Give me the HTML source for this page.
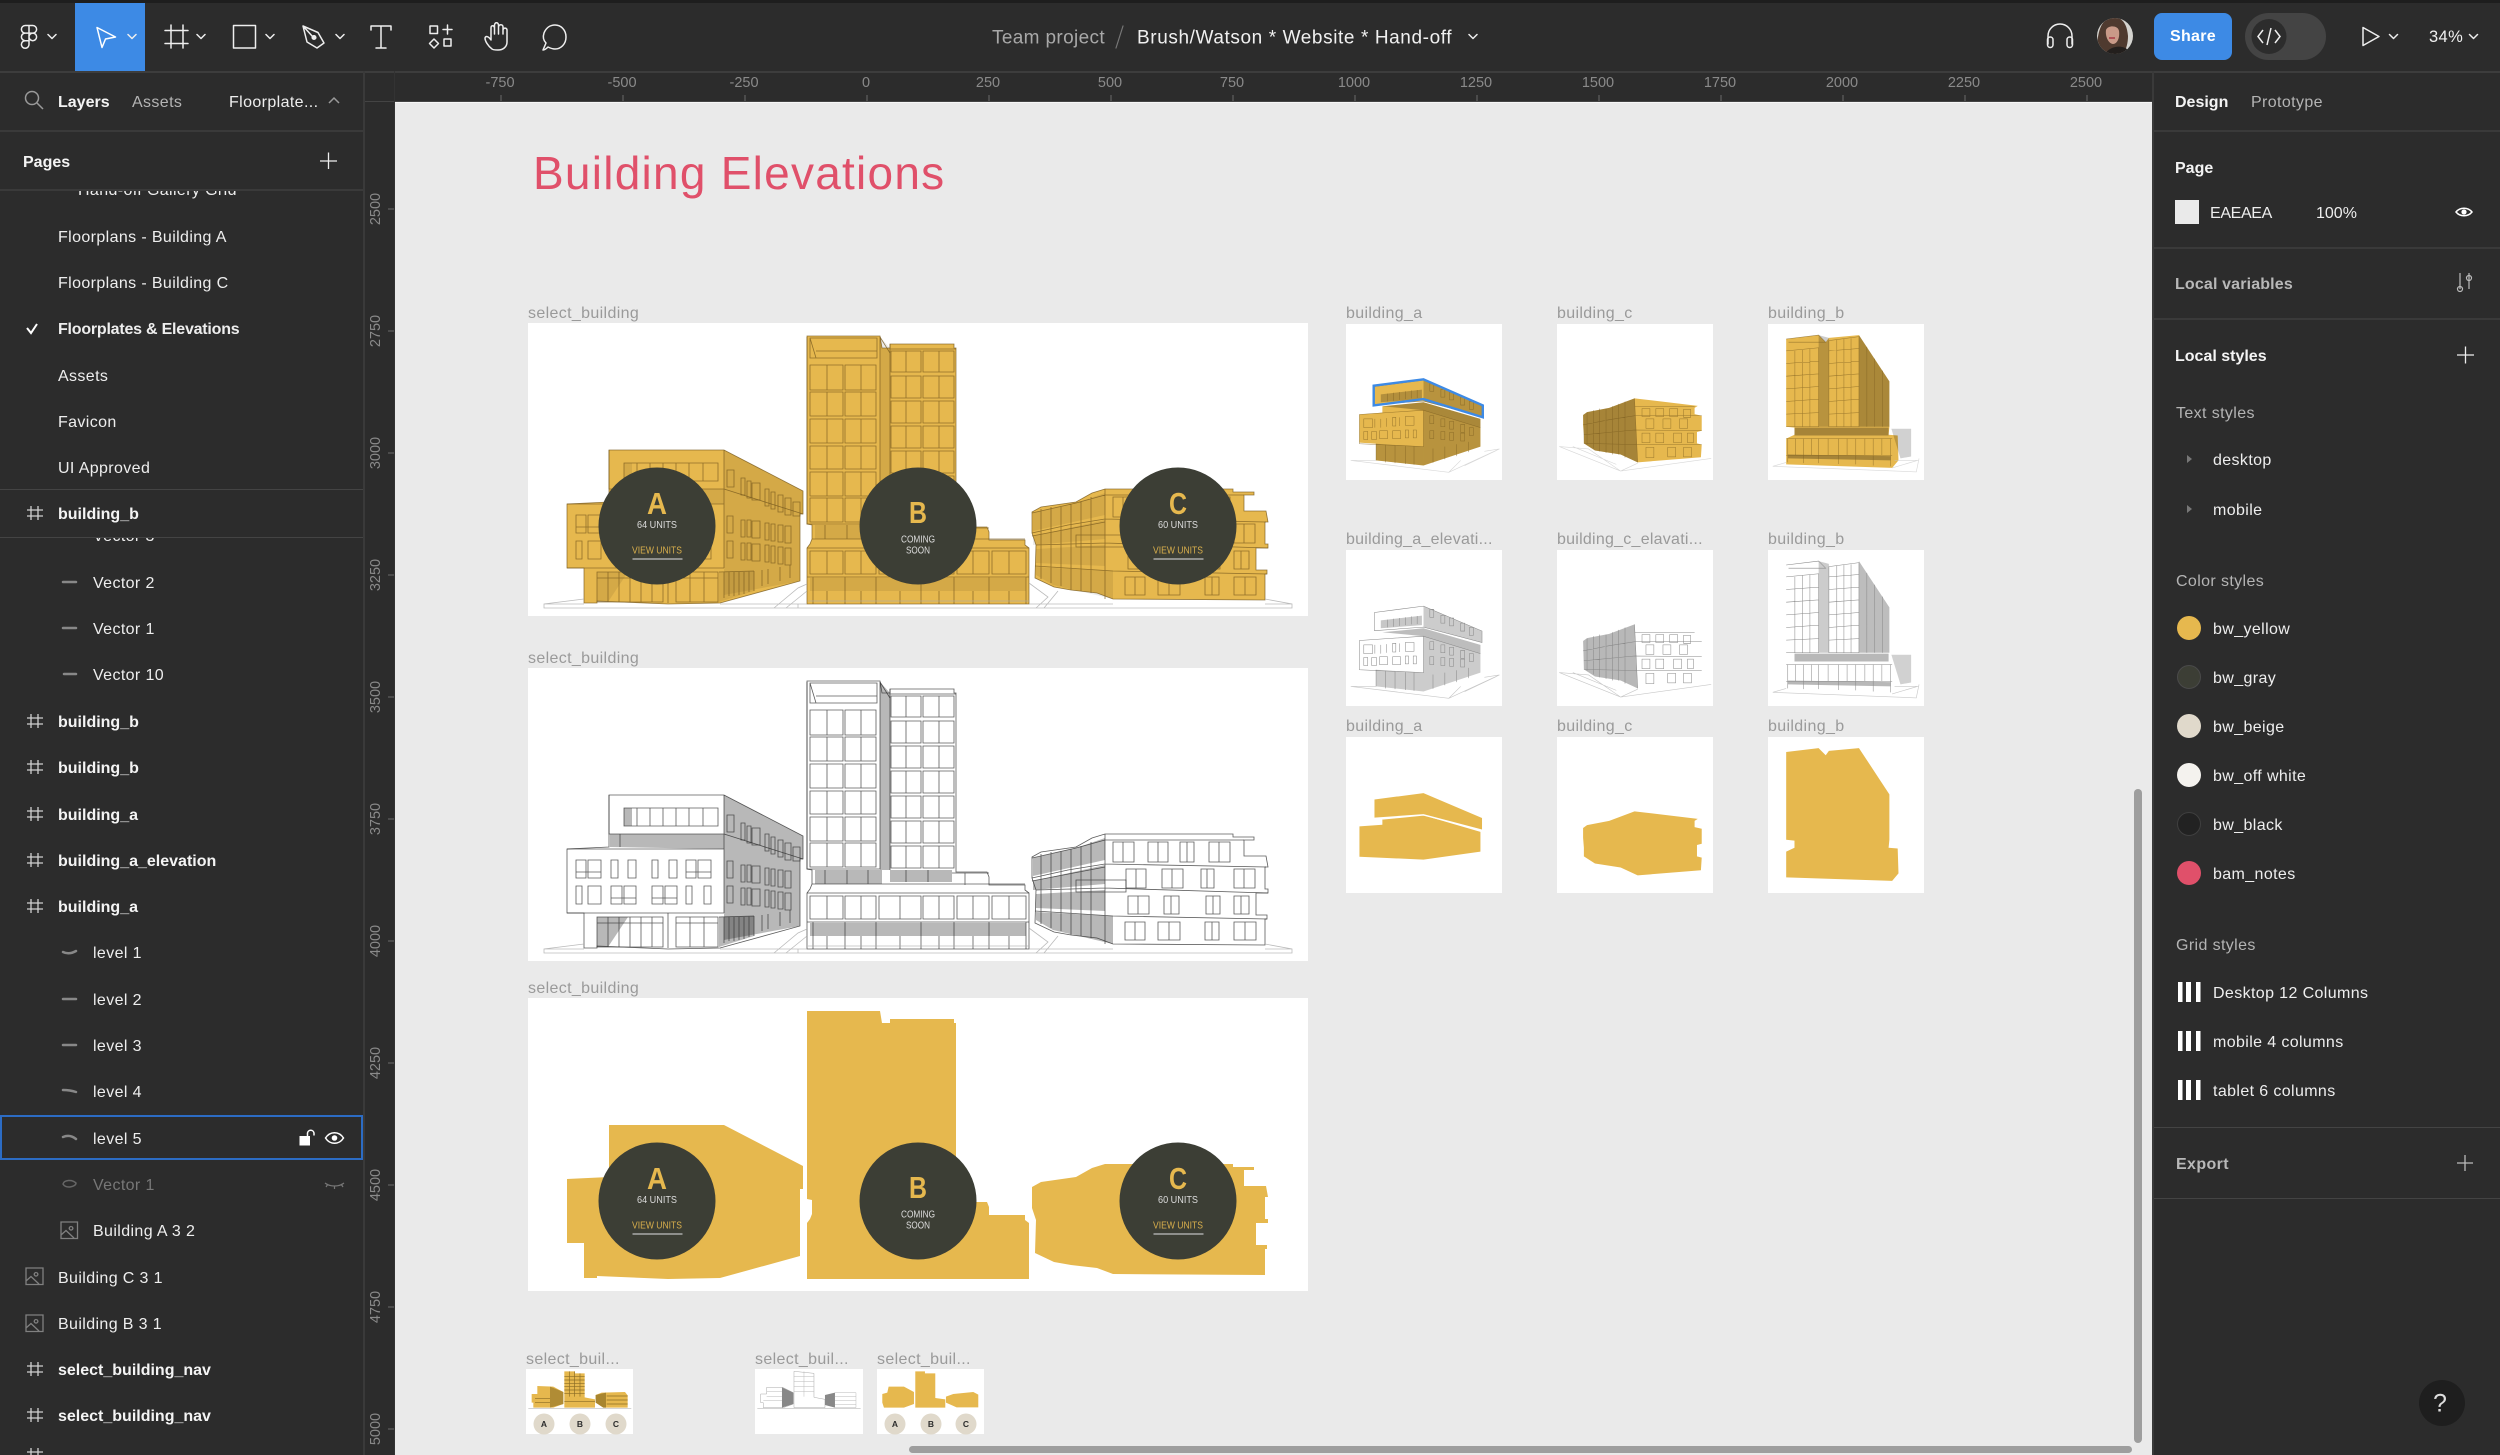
<!DOCTYPE html>
<html><head><meta charset="utf-8"><title>Figma</title>
<style>
html,body{margin:0;padding:0;width:2500px;height:1455px;overflow:hidden;background:#2c2c2c}
body{position:relative;font-family:"Liberation Sans",sans-serif;color:#eee}
.t{position:absolute;z-index:2;white-space:nowrap;line-height:1;transform:translateY(-50%);margin-top:1.5px;font-size:16px;letter-spacing:.38px;color:#eee}
.b{font-weight:700;color:#f4f4f4;letter-spacing:0}
.g{color:#b4b4b4}
.l{color:#9a9a9a;font-size:16px;letter-spacing:.35px}
.r{color:#8a8a8a;font-size:14.5px;letter-spacing:0;text-align:center;width:80px;margin:0 0 0 -1px}
.rv{position:absolute;z-index:2;color:#8a8a8a;font-size:14.5px;line-height:1;width:60px;text-align:center;transform:translate(-50%,-50%) rotate(-90deg);left:376px}
.box{position:absolute}
svg{position:absolute;left:0;top:0;z-index:1}
</style></head><body>
<div class="box" style="left:0;top:0;width:2500px;height:3px;background:#1e1e1e"></div>
<div class="box" style="left:395px;top:102px;width:1757px;height:1353px;background:#eaeaea;border-top:1px solid #f7f7f7;box-sizing:border-box"></div>
<div class="box" style="left:75px;top:3px;width:70px;height:68px;background:#3d8ae5"></div>
<div class="box" style="left:0;top:71px;width:2500px;height:2px;background:#3d3d3d"></div>
<div class="box" style="left:363px;top:71px;width:2px;height:1384px;background:#3a3a3a"></div>
<div class="box" style="left:365px;top:101px;width:1787px;height:1px;background:#444"></div>
<div class="box" style="left:394px;top:71px;width:1px;height:1384px;background:#333"></div>
<div class="box" style="left:2152px;top:71px;width:2px;height:1384px;background:#3a3a3a"></div>
<div class="box" style="left:0;top:130px;width:363px;height:2px;background:#3a3a3a"></div>
<div class="box" style="left:2154px;top:130px;width:346px;height:2px;background:#3a3a3a"></div>
<div class="box" style="left:2154px;top:247px;width:346px;height:2px;background:#3a3a3a"></div>
<div class="box" style="left:2154px;top:318px;width:346px;height:2px;background:#3a3a3a"></div>
<div class="box" style="left:2154px;top:1127px;width:346px;height:1px;background:#444"></div>
<div class="box" style="left:2154px;top:1198px;width:346px;height:1px;background:#444"></div>

<!-- Page list (clipped first row) -->
<div class="box" style="left:0;top:189px;width:363px;height:2px;background:#3a3a3a"></div>
<div class="box" style="left:0;top:191px;width:363px;height:12px;overflow:hidden"><div class="t" style="left:78px;top:-2px">Hand-off Gallery Grid</div></div>
<div class="box" style="left:0;top:489px;width:363px;height:1px;background:#444"></div>
<div class="box" style="left:0;top:537px;width:363px;height:1px;background:#444"></div>
<div class="box" style="left:0;top:538px;width:363px;height:12px;overflow:hidden"><div class="t" style="left:93px;top:-3px">Vector 3</div></div>
<div class="box" style="left:0;top:1115px;width:363px;height:45px;border:2px solid #2c6cc4;box-sizing:border-box"></div>

<!-- top bar text -->
<div class="t" style="left:992px;top:36px;font-size:19px;color:#a8a8a8;letter-spacing:.35px">Team project</div>
<div class="t" style="left:1137px;top:36px;font-size:19px;letter-spacing:.6px;color:#f0f0f0">Brush/Watson * Website * Hand-off</div>
<div class="t" style="left:2170px;top:35.5px;font-size:16px;font-weight:700;color:#fff;letter-spacing:.3px">Share</div>
<div class="t" style="left:2429px;top:35.5px;font-size:16.5px;color:#f0f0f0">34%</div>

<!-- left panel text -->
<div class="t b" style="left:58px;top:101px">Layers</div>
<div class="t g" style="left:132px;top:101px">Assets</div>
<div class="t" style="left:229px;top:101px">Floorplate...</div>
<div class="t b" style="left:23px;top:161px">Pages</div>
<div class="t" style="left:58px;top:236px">Floorplans - Building A</div>
<div class="t" style="left:58px;top:282px">Floorplans - Building C</div>
<div class="t" style="left:58px;top:328px;font-weight:700;letter-spacing:-.22px">Floorplates &amp; Elevations</div>
<div class="t" style="left:58px;top:375px">Assets</div>
<div class="t" style="left:58px;top:421px">Favicon</div>
<div class="t" style="left:58px;top:467px">UI Approved</div>
<div class="t b" style="left:58px;top:513px">building_b</div>
<div class="t" style="left:93px;top:582px">Vector 2</div>
<div class="t" style="left:93px;top:628px">Vector 1</div>
<div class="t" style="left:93px;top:674px">Vector 10</div>
<div class="t b" style="left:58px;top:721px">building_b</div>
<div class="t b" style="left:58px;top:767px">building_b</div>
<div class="t b" style="left:58px;top:814px">building_a</div>
<div class="t b" style="left:58px;top:860px">building_a_elevation</div>
<div class="t b" style="left:58px;top:906px">building_a</div>
<div class="t" style="left:93px;top:952px">level 1</div>
<div class="t" style="left:93px;top:999px">level 2</div>
<div class="t" style="left:93px;top:1045px">level 3</div>
<div class="t" style="left:93px;top:1091px">level 4</div>
<div class="t" style="left:93px;top:1138px">level 5</div>
<div class="t" style="left:93px;top:1184px;color:#777">Vector 1</div>
<div class="t" style="left:93px;top:1230px">Building A 3 2</div>
<div class="t" style="left:58px;top:1277px">Building C 3 1</div>
<div class="t" style="left:58px;top:1323px">Building B 3 1</div>
<div class="t b" style="left:58px;top:1369px">select_building_nav</div>
<div class="t b" style="left:58px;top:1415px">select_building_nav</div>

<!-- right panel text -->
<div class="t b" style="left:2175px;top:101px">Design</div>
<div class="t g" style="left:2251px;top:101px">Prototype</div>
<div class="t b" style="left:2175px;top:167px">Page</div>
<div class="t" style="left:2210px;top:212px;letter-spacing:-.35px">EAEAEA</div>
<div class="t" style="left:2316px;top:212px;letter-spacing:0">100%</div>
<div class="t" style="left:2175px;top:283px;font-weight:700;color:#b8b8b8;letter-spacing:.15px">Local variables</div>
<div class="t b" style="left:2175px;top:355px">Local styles</div>
<div class="t g" style="left:2176px;top:412px">Text styles</div>
<div class="t" style="left:2213px;top:459px">desktop</div>
<div class="t" style="left:2213px;top:509px">mobile</div>
<div class="t g" style="left:2176px;top:580px">Color styles</div>
<div class="t" style="left:2213px;top:628px">bw_yellow</div>
<div class="t" style="left:2213px;top:677px">bw_gray</div>
<div class="t" style="left:2213px;top:726px">bw_beige</div>
<div class="t" style="left:2213px;top:775px">bw_off white</div>
<div class="t" style="left:2213px;top:824px">bw_black</div>
<div class="t" style="left:2213px;top:873px">bam_notes</div>
<div class="t g" style="left:2176px;top:944px">Grid styles</div>
<div class="t" style="left:2213px;top:992px">Desktop 12 Columns</div>
<div class="t" style="left:2213px;top:1041px">mobile 4 columns</div>
<div class="t" style="left:2213px;top:1090px">tablet 6 columns</div>
<div class="t" style="left:2176px;top:1163px;font-weight:700;color:#b8b8b8">Export</div>
<div class="t" style="left:2433px;top:1402px;font-size:25px;color:#ddd;letter-spacing:0">?</div>

<!-- rulers -->
<div class="t r" style="left:461px;top:83px">-750</div><div class="t r" style="left:583px;top:83px">-500</div><div class="t r" style="left:705px;top:83px">-250</div><div class="t r" style="left:827px;top:83px">0</div><div class="t r" style="left:949px;top:83px">250</div><div class="t r" style="left:1071px;top:83px">500</div><div class="t r" style="left:1193px;top:83px">750</div><div class="t r" style="left:1315px;top:83px">1000</div><div class="t r" style="left:1437px;top:83px">1250</div><div class="t r" style="left:1559px;top:83px">1500</div><div class="t r" style="left:1681px;top:83px">1750</div><div class="t r" style="left:1803px;top:83px">2000</div><div class="t r" style="left:1925px;top:83px">2250</div><div class="t r" style="left:2047px;top:83px">2500</div>
<div class="rv" style="top:209px">2500</div><div class="rv" style="top:331px">2750</div><div class="rv" style="top:453px">3000</div><div class="rv" style="top:575px">3250</div><div class="rv" style="top:697px">3500</div><div class="rv" style="top:819px">3750</div><div class="rv" style="top:941px">4000</div><div class="rv" style="top:1063px">4250</div><div class="rv" style="top:1185px">4500</div><div class="rv" style="top:1307px">4750</div><div class="rv" style="top:1429px">5000</div>

<!-- canvas labels -->
<div class="t" style="left:533px;top:171px;font-size:46px;color:#e0506a;letter-spacing:1.25px">Building Elevations</div>
<div class="t l" style="left:528px;top:312px">select_building</div>
<div class="t l" style="left:528px;top:657px">select_building</div>
<div class="t l" style="left:528px;top:987px">select_building</div>
<div class="t l" style="left:1346px;top:312px">building_a</div>
<div class="t l" style="left:1557px;top:312px">building_c</div>
<div class="t l" style="left:1768px;top:312px">building_b</div>
<div class="t l" style="left:1346px;top:538px;letter-spacing:.25px">building_a_elevati...</div>
<div class="t l" style="left:1557px;top:538px;letter-spacing:.25px">building_c_elavati...</div>
<div class="t l" style="left:1768px;top:538px">building_b</div>
<div class="t l" style="left:1346px;top:725px">building_a</div>
<div class="t l" style="left:1557px;top:725px">building_c</div>
<div class="t l" style="left:1768px;top:725px">building_b</div>
<div class="t l" style="left:526px;top:1358px">select_buil...</div>
<div class="t l" style="left:755px;top:1358px">select_buil...</div>
<div class="t l" style="left:877px;top:1358px">select_buil...</div>

<svg width="2500" height="1455" viewBox="0 0 2500 1455">
<defs>
<polygon id="sa" points="81,127 196,127 275,168 275,191 272,191 272,258 192,280 140,281 69,278 69,280 56,280 56,245 39,245 39,181 81,179"/>
<polygon id="sb" points="279,13 352,13 354,25 362,25 362,21 426,21 426,25 428,25 428,204 459,204 461,209 461,217 497,217 497,222 501,225 501,281 279,281 279,225 282,221 284,216 284,202 279,201"/>
<polygon id="sc" points="504,189 513,184 548,179 564,170 577,166 705,166 705,169 726,169 726,172 716,172 716,188 738,188 740,199 737,199 737,221 740,221 740,225 728,225 728,247 739,247 739,251 737,251 737,277 585,276 569,270 543,267 526,264 507,255 508,222 504,210 504,190"/>
<g id="shade" stroke="none" fill="#000">
 <polygon points="196,127 275,168 275,191 272,191 272,258 196,272 196,245 196,166"/>
 <polygon points="96,140 104,140 104,158 96,158"/>
 <polygon points="82,166 196,166 196,181 82,179"/>
 <polygon points="69,249 100,249 80,279 69,279"/>
 <polygon points="191,249 226,248 226,268 191,279"/>
 <polygon points="287,202 354,202 354,216 287,216"/>
 <polygon points="362,202 424,202 424,214 362,214"/>
 <polygon points="352,14 362,25 362,202 352,202"/>
 <rect x="282" y="255" width="216" height="13"/>
 <polygon points="505,190 548,180 577,170 577,192 505,208"/>
 <polygon points="505,213 577,197 577,216 505,222"/>
 <polygon points="508,226 577,222 577,243 508,240"/>
 <polygon points="508,244 585,248 585,276 525,262 508,252"/>
</g>
<g id="lines" fill="none" stroke-width=".8">
 <use href="#sa"/><use href="#sb"/><use href="#sc"/>
 <path d="M279 14V201H352V14M282 15H349V35H282ZM282 15L288 35M288 28H349M352 14L362 30"/>
 <path d="M282 42h33v25h-33zM317 42h31v25h-31zM299 42v25M333 42v25M282 69h33v24h-33zM317 69h31v24h-31zM299 69v24M333 69v24M282 96h33v24h-33zM317 96h31v24h-31zM299 96v24M333 96v24M282 123h33v23h-33zM317 123h31v23h-31zM299 123v23M333 123v23M282 149h33v24h-33zM317 149h31v24h-31zM299 149v24M333 149v24M282 175h33v24h-33zM317 175h31v24h-31zM299 175v24M333 175v24"/>
 <path d="M362 21V202M362 26H428M363 28h30v21h-30zM395 28h31v21h-31zM378 28v21M411 28v21M363 53h30v22h-30zM395 53h31v22h-31zM378 53v22M411 53v22M363 78h30v22h-30zM395 78h31v22h-31zM378 78v22M411 78v22M363 103h30v22h-30zM395 103h31v22h-31zM378 103v22M411 103v22M363 128h30v22h-30zM395 128h31v22h-31zM378 128v22M411 128v22M363 153h30v22h-30zM395 153h31v22h-31zM378 153v22M411 153v22M363 178h30v22h-30zM395 178h31v22h-31zM378 178v22M411 178v22"/>
 <path d="M297 202v14M319 202v14M340 202v14M378 202v12M400 202v12M424 205H461M437 205v12M284 216H497M279 225H501M282 228h33v23h-33zM317 228h31v23h-31zM351 228h42v23h-42zM395 228h31v23h-31zM429 228h32v23h-32zM464 228h34v23h-34zM299 228v23M333 228v23M372 228v23M411 228v23M445 228v23M481 228v23M279 254H501M285 254v27M317 254v27M348 254v27M393 254v27M426 254v27M461 254v27M498 254v27M299 268v13M333 268v13M372 268v13M411 268v13M445 268v13M481 268v13"/>
 <path d="M81 127V166H196V127M96 140h94v18h-94zM109 140v18M122 140v18M135 140v18M148 140v18M161 140v18M175 140v18M92 166v13M196 166V245M39 181H196M39 245H196M196 166L275 191"/>
 <path d="M48 192h10v18h-10zM60 192h13v18h-13zM48 204h25M83 192h7v18h-7zM100 192h8v18h-8zM124 192h6v18h-6zM141 192h8v18h-8zM158 192h10v18h-10zM170 192h13v18h-13zM158 204h25"/>
 <path d="M48 218h6v18h-6zM60 218h13v18h-13zM83 218h11v18h-11zM96 218h12v18h-12zM83 230h25M124 218h11v18h-11zM137 218h12v18h-12zM124 230h25M158 218h6v18h-6zM176 218h7v18h-7z"/>
 <path d="M69 249h66v30H69zM69 255h66M80 249v30M91 249v30M102 249v30M113 249v30M124 249v30M140 245v35M148 249h42v30h-42zM148 255h42M162 249v30M176 249v30M196 249v26M201 249v24M206 249v24M211 249v23M216 249v22M221 248v21M226 248v20M191 249l35-1"/>
 <path d="M199 147h7v17h-7zM213 155h4v17h-4zM219 158h4v17h-4zM224 160h8v17h-8zM237 166h4v17h-4zM243 169h4v17h-4zM250 172h5v17h-5zM257 175h6v17h-6zM265 179h7v14h-7zM199 193h6v17h-6zM213 197h4v17h-4zM219 197h4v17h-4zM224 198h8v17h-8zM237 200h4v17h-4zM243 201h4v17h-4zM250 202h5v17h-5zM257 203h6v17h-6zM199 218h6v17h-6zM213 220h4v17h-4zM219 220h4v17h-4zM224 221h8v17h-8zM237 222h4v17h-4zM243 223h4v17h-4zM250 224h5v17h-5zM257 225h6v17h-6zM234 247v16M240 246v15M252 244v14M262 242v13"/>
 <path d="M577 166V276M504 210L540 202L577 196L738 199M504 213L577 199M508 222L577 220L740 225M507 243L585 248L739 251M577 172H716M504 190L548 180L577 172M513 186v70M523 184v76M533 183v80M543 181v86M553 178v90M563 174v96M548 212h50v12h-50z"/>
 <path d="M585 174h21v20h-21zM620 174h20v20h-20zM652 174h14v20h-14zM681 174h21v20h-21zM595 174v20M630 174v20M659 174v20M691 174v20M598 201h20v19h-20zM634 201h21v19h-21zM673 201h13v19h-13zM706 201h21v19h-21zM608 201v19M644 201v19M679 201v19M716 201v19M600 228h21v18h-21zM636 228h15v18h-15zM678 228h14v18h-14zM706 228h15v18h-15zM610 228v18M643 228v18M685 228v18M713 228v18M597 254h20v18h-20zM630 254h22v18h-22zM677 254h14v18h-14zM706 254h22v18h-22zM607 254v18M641 254v18M684 254v18M717 254v18"/>
 <path stroke="#aaa" stroke-width=".8" d="M56 276L16 281V285H764V281L737 276M16 281H56M192 281H279M246 285L270 265L279 261M258 285L279 268M501 260L520 274L508 285M530 268L516 285M501 281H585M737 281H764M270 285V281M280 278H501"/>
</g>
<polygon id="ta" points="72,158 196,142 344,205 344,234 196,195 72,204"/>
<polygon id="tc" points="66,230 76,223 132,212 196,188 356,207 348,212 348,228 366,232 366,270 354,273 354,302 366,305 364,337 204,350 161,330 96,320 68,302 68,280 66,255"/>
<polygon id="tb" points="46,38 128,28 146,46 154,35 230,28 307,145 307,260 305,280 328,282 330,345 314,364 46,355 46,290 67,280 67,262 46,260"/>
<g id="aDet">
 <polygon points="196,142 344,205 344,234 196,195" fill="#000" fill-opacity=".2" stroke="none"/>
 <polygon points="196,218 340,262 340,310 196,358" fill="#000" fill-opacity=".2" stroke="none"/>
 <polygon points="92,208 196,198 340,240 340,262 196,218" fill="#000" fill-opacity=".26" stroke="none"/>
 <polygon points="88,178 192,166 192,190 88,198" fill="#000" fill-opacity=".22" stroke="none"/>
 <polygon points="76,303 196,310 196,358 76,345" fill="#000" fill-opacity=".2" stroke="none"/>
 <path fill="none" stroke-width="1.3" d="M72 158L196 142L344 205V234L196 195L72 204ZM34 229L196 218V310L34 303ZM196 218L340 262M105 176v20M120 174v20M135 172v20M150 170v20M165 168v20M180 167v20M45 240h22v22h-22zM73 240v22M88 240v22M103 238v22M118 236h8v22h-8zM135 236v22M150 234h22v22h-22zM45 272h10v20h-10zM65 272h12v20h-12zM85 270h20v20h-20zM118 270h20v20h-20zM150 268h8v20h-8zM170 268h8v20h-8zM76 303V345M100 305V350M124 306V352M150 308V354M172 309V356M212 150h10v20h-10zM240 165h10v20h-10zM262 172h10v20h-10zM290 185h10v20h-10zM312 196h10v20h-10zM212 232h10v20h-10zM240 240h10v20h-10zM262 246h10v20h-10zM290 254h10v20h-10zM312 262h10v20h-10zM212 270h10v20h-10zM240 272h10v20h-10zM262 274h10v20h-10zM290 276h10v20h-10zM220 315v36M250 310v32M280 304v30M310 298v26"/>
 <path fill="none" stroke="#c8c8c8" stroke-width="1.6" d="M12 345L260 375L388 316L350 322M76 345L12 345M260 375L290 345M300 358L380 320"/>
</g>
<g id="cDet">
 <polygon points="66,230 76,223 132,212 196,188 204,350 161,330 96,320 68,302" fill="#000" fill-opacity=".28" stroke="none"/>
 <path fill="none" stroke-width="1.3" d="M196 188L204 350M66 255L132 242L196 232L366 232M68 280L196 268L366 270M68 302L204 305L366 305M196 208H348M76 224V305M92 218V315M108 214V322M124 214V326M140 208V330M156 202V330M172 196V338M215 214h20v20h-20zM250 214h20v20h-20zM285 214h20v20h-20zM320 216h18v20h-18zM225 240h20v24h-20zM268 240h20v24h-20zM310 240h20v24h-20zM215 276h20v24h-20zM250 276h20v24h-20zM295 276h20v24h-20zM330 276h15v24h-15zM225 312h20v26h-20zM280 312h20v24h-20zM320 312h20v24h-20z"/>
 <path fill="none" stroke="#c8c8c8" stroke-width="1.6" d="M6 310L80 316L161 372L390 340M6 310L161 372M40 310L150 355M204 352L161 372"/>
</g>
<g id="bDet">
 <polygon points="230,28 307,145 307,260 230,260" fill="#000" fill-opacity=".26" stroke="none"/>
 <polygon points="128,28 154,35 154,260 128,260" fill="#000" fill-opacity=".2" stroke="none"/>
 <polygon points="67,262 305,262 305,282 67,282" fill="#000" fill-opacity=".28" stroke="none"/>
 <polygon points="50,330 310,334 310,345 50,340" fill="#000" fill-opacity=".28" stroke="none"/>
 <polygon points="312,265 362,265 362,335 335,340" fill="#000" fill-opacity=".18" stroke="none"/>
 <path fill="none" stroke-width="1.3" d="M46 38L128 28L146 46H52M46 68L128 60V260H46M46 100L128 94M46 132L128 126M46 164L128 158M46 196L128 190M46 228L128 224M68 68V260M87 64V260M106 62V260M154 42L230 32V260H154ZM154 68L230 62M154 100L230 94M154 132L230 126M154 164L230 158M154 196L230 190M154 228L230 224M174 40V260M192 38V260M210 36V260M250 58V260M270 88V260M290 118V260M46 290H314M50 290V350M90 290V352M128 290V352M178 290V354M222 290V355M266 290V358M310 290V360M46 332H314M70 290v42M110 290v42M152 290v42M200 290v42M245 290v42M288 290v42"/>
 <path fill="none" stroke="#c8c8c8" stroke-width="1.6" d="M12 360L46 350M12 360L375 374L382 340M314 364L378 345M320 345H380"/>
</g>
</defs>

<!-- big cards -->
<g transform="translate(528,323)">
 <rect width="780" height="293" fill="#fff"/>
 <g fill="#e6b84e"><use href="#sa"/><use href="#sb"/><use href="#sc"/></g>
 <use href="#shade" fill-opacity=".08"/>
 <use href="#lines" stroke="#7a5d20" stroke-opacity=".8"/>
 <g fill="#3c3e35"><circle cx="129" cy="203" r="58.5"/><circle cx="390" cy="203" r="58.5"/><circle cx="650" cy="203" r="58.5"/></g>
 <g font-family="'Liberation Sans Narrow','Liberation Sans',sans-serif" text-anchor="middle">
  <text x="129" y="191" font-size="31" font-weight="700" fill="#e6b84e" textLength="20" lengthAdjust="spacingAndGlyphs">A</text>
  <text x="390" y="200" font-size="31" font-weight="700" fill="#e6b84e" textLength="18" lengthAdjust="spacingAndGlyphs">B</text>
  <text x="650" y="191" font-size="31" font-weight="700" fill="#e6b84e" textLength="18" lengthAdjust="spacingAndGlyphs">C</text>
  <g font-size="10" fill="#ddd">
   <text x="129" y="205" textLength="40" lengthAdjust="spacingAndGlyphs">64 UNITS</text>
   <text x="650" y="205" textLength="40" lengthAdjust="spacingAndGlyphs">60 UNITS</text>
   <text x="390" y="219.500" textLength="34" lengthAdjust="spacingAndGlyphs">COMING</text>
   <text x="390" y="230.500" textLength="24" lengthAdjust="spacingAndGlyphs">SOON</text>
  </g>
  <g font-size="10" fill="#d8ae4c">
   <text x="129" y="230.500" textLength="50" lengthAdjust="spacingAndGlyphs">VIEW UNITS</text>
   <text x="650" y="230.500" textLength="50" lengthAdjust="spacingAndGlyphs">VIEW UNITS</text>
  </g>
 </g>
 <path d="M104.500 236H154.500M625.500 236H675.500" stroke="#aaa" stroke-width="1.500"/>
</g>
<g transform="translate(528,668)">
 <rect width="780" height="293" fill="#fff"/>
 <use href="#shade" fill-opacity=".28"/>
 <use href="#lines" stroke="#333" stroke-opacity=".8"/>
</g>
<g transform="translate(528,998)">
 <rect width="780" height="293" fill="#fff"/>
 <g fill="#e6b84e"><use href="#sa"/><use href="#sb"/><use href="#sc"/></g>
 <g fill="#3c3e35"><circle cx="129" cy="203" r="58.5"/><circle cx="390" cy="203" r="58.5"/><circle cx="650" cy="203" r="58.5"/></g>
 <g font-family="'Liberation Sans Narrow','Liberation Sans',sans-serif" text-anchor="middle">
  <text x="129" y="191" font-size="31" font-weight="700" fill="#e6b84e" textLength="20" lengthAdjust="spacingAndGlyphs">A</text>
  <text x="390" y="200" font-size="31" font-weight="700" fill="#e6b84e" textLength="18" lengthAdjust="spacingAndGlyphs">B</text>
  <text x="650" y="191" font-size="31" font-weight="700" fill="#e6b84e" textLength="18" lengthAdjust="spacingAndGlyphs">C</text>
  <g font-size="10" fill="#ddd">
   <text x="129" y="205" textLength="40" lengthAdjust="spacingAndGlyphs">64 UNITS</text>
   <text x="650" y="205" textLength="40" lengthAdjust="spacingAndGlyphs">60 UNITS</text>
   <text x="390" y="219.500" textLength="34" lengthAdjust="spacingAndGlyphs">COMING</text>
   <text x="390" y="230.500" textLength="24" lengthAdjust="spacingAndGlyphs">SOON</text>
  </g>
  <g font-size="10" fill="#d8ae4c">
   <text x="129" y="230.500" textLength="50" lengthAdjust="spacingAndGlyphs">VIEW UNITS</text>
   <text x="650" y="230.500" textLength="50" lengthAdjust="spacingAndGlyphs">VIEW UNITS</text>
  </g>
 </g>
 <path d="M104.500 236H154.500M625.500 236H675.500" stroke="#aaa" stroke-width="1.500"/>
</g>

<!-- thumb rows -->
<g fill="#fff">
 <rect x="1346" y="324" width="156" height="156"/><rect x="1557" y="324" width="156" height="156"/><rect x="1768" y="324" width="156" height="156"/>
 <rect x="1346" y="550" width="156" height="156"/><rect x="1557" y="550" width="156" height="156"/><rect x="1768" y="550" width="156" height="156"/>
 <rect x="1346" y="737" width="156" height="156"/><rect x="1557" y="737" width="156" height="156"/><rect x="1768" y="737" width="156" height="156"/>
</g>
<g transform="translate(1346,324) scale(.3954)">
 <polygon points="34,229 92,224 92,208 196,198 340,240 340,310 196,358 76,345 76,303 34,300" fill="#e6b84e"/><use href="#ta" fill="#e6b84e"/>
 <use href="#aDet" stroke="#7a5d20" stroke-opacity=".7"/>
 <polygon points="70,156 196,140 346,206 346,236 196,190 70,206" fill="none" stroke="#3d8ae5" stroke-width="6"/>
</g>
<g transform="translate(1557,324) scale(.3954)"><use href="#tc" fill="#e6b84e"/><use href="#cDet" stroke="#7a5d20" stroke-opacity=".7"/></g>
<g transform="translate(1768,324) scale(.3954)"><use href="#tb" fill="#e6b84e"/><use href="#bDet" stroke="#7a5d20" stroke-opacity=".7"/></g>
<g transform="translate(1346,550) scale(.3954)"><use href="#aDet" stroke="#888"/></g>
<g transform="translate(1557,550) scale(.3954)"><use href="#cDet" stroke="#888"/></g>
<g transform="translate(1768,550) scale(.3954)"><use href="#bDet" stroke="#888"/></g>
<g transform="translate(1346,737) scale(.3954)" fill="#e6b84e">
 <use href="#ta"/>
 <polygon points="92,208 196,198 340,240 340,290 196,310 34,303 34,226 92,222"/>
 <path d="M92 208L196 198L344 236" fill="none" stroke="#fff" stroke-width="2"/>
</g>
<g transform="translate(1557,737) scale(.3954)"><use href="#tc" fill="#e6b84e"/></g>
<g transform="translate(1768,737) scale(.3954)"><use href="#tb" fill="#e6b84e"/></g>

<!-- nav thumbs -->
<g fill="#fff"><rect x="526" y="1369" width="107" height="65"/><rect x="755" y="1369" width="108" height="65"/><rect x="877" y="1369" width="107" height="65"/></g>
<g transform="translate(500,1330) scale(.3333)">
 <polygon fill="#e6b84e" points="95,192 112,192 112,168 160,170 190,186 190,222 160,233 100,233 100,218 95,218"/>
 <polygon fill="#b08c35" points="150,170 190,186 190,222 150,233"/>
 <polygon fill="#e6b84e" points="193,124 224,124 224,130 254,130 254,202 285,208 285,233 193,233"/>
 <polygon fill="#e6b84e" points="287,195 305,188 375,186 383,196 383,233 310,233 287,218"/>
 <polygon fill="#a8852f" points="287,195 318,188 318,233 310,233 287,218"/>
 <path d="M193 140H254M193 150H254M193 160H254M193 170H254M193 180H254M193 190H254M224 124V200M208 124V200M240 130V200M193 215H285M320 198H383M320 210H383M320 222H383M105 205H150M105 218H150" stroke="#8a6c25" stroke-width="2" fill="none"/>
 <path d="M85 236H394" stroke="#bbb" stroke-width="2"/>
</g>
<g transform="translate(500,1330) scale(.3333)">
 <polygon fill="none" stroke="#aaa" stroke-width="1.500" points="782,192 800,192 800,172 848,172 880,188 880,222 850,233 790,233 790,218 782,218"/>
 <polygon fill="#888" points="846,172 880,188 880,222 846,233"/>
 <polygon fill="none" stroke="#aaa" stroke-width="1.500" points="882,124 942,130 942,202 975,208 975,233 882,233"/>
 <polygon fill="#888" points="975,195 1005,188 1005,233 975,225"/>
 <path d="M1005 188H1068V233H1005M1005 200H1068M1005 212H1068M1005 224H1068M882 140H942M882 155H942M882 170H942M882 185H942M912 124V200M800 185H846M800 200H846M790 212H846" fill="none" stroke="#bbb" stroke-width="1.500"/>
 <path d="M772 236H1082" stroke="#bbb" stroke-width="2"/>
</g>
<g transform="translate(500,1330) scale(.3333)" fill="#e6b84e">
 <polygon points="1147,192 1162,188 1166,170 1212,170 1242,186 1242,222 1212,233 1152,233 1147,218"/>
 <polygon points="1246,124 1275,124 1275,130 1306,130 1306,204 1336,208 1336,233 1246,233"/>
 <polygon points="1338,200 1360,192 1420,186 1435,194 1435,232 1370,232 1338,218"/>
</g>
<g fill="#e0d9cb">
 <circle cx="544" cy="1424" r="10.500"/><circle cx="580" cy="1424" r="10.500"/><circle cx="616" cy="1424" r="10.500"/>
 <circle cx="895" cy="1424" r="10.500"/><circle cx="931" cy="1424" r="10.500"/><circle cx="966" cy="1424" r="10.500"/>
</g>
<g font-size="8.500" font-weight="700" fill="#2c2c2c" text-anchor="middle" font-family="'Liberation Sans',sans-serif">
 <text x="544" y="1427">A</text><text x="580" y="1427">B</text><text x="616" y="1427">C</text>
 <text x="895" y="1427">A</text><text x="931" y="1427">B</text><text x="966" y="1427">C</text>
</g>

<!-- scrollbars -->
<rect x="2134" y="789" width="8" height="654" rx="4" fill="#9e9e9e"/>
<rect x="909" y="1446" width="1223" height="7" rx="3.500" fill="#9e9e9e"/>

<!-- ruler ticks -->
<path stroke="#6a6a6a" stroke-width="1" d="M501 95v6M623 95v6M745 95v6M867 95v6M989 95v6M1111 95v6M1233 95v6M1355 95v6M1477 95v6M1599 95v6M1721 95v6M1843 95v6M1965 95v6M2087 95v6"/>
<path stroke="#6a6a6a" stroke-width="1" d="M388 209h6M388 331h6M388 453h6M388 575h6M388 697h6M388 819h6M388 941h6M388 1063h6M388 1185h6M388 1307h6M388 1429h6"/>

<!-- toolbar icons -->
<g fill="none" stroke="#eee" stroke-width="1.500" stroke-linejoin="round" stroke-linecap="round">
 <path d="M29 25.500h-3.800a3.800 3.800 0 0 0 0 7.600H29zM29 25.500h3.800a3.800 3.800 0 0 1 0 7.600H29zM29 33.100h-3.800a3.800 3.800 0 0 0 0 7.600H29zM29 36.900a3.800 3.800 0 1 0 7.600 0a3.800 3.800 0 1 0-7.600 0M29 40.700h-3.800a3.800 3.800 0 1 0 3.800 3.800z"/>
 <path d="M48 34.500l4 4 4-4M128 34.500l4 4 4-4M197 34.500l4 4 4-4M266 34.500l4 4 4-4M336 34.500l4 4 4-4"/>
 <path stroke="#fff" d="M97 27.500L115.500 37L105.500 39L102 47.500Z"/>
 <path d="M171 25V48M183 25V48M165 30.500H188M165 43.500H188"/>
 <rect x="233.500" y="25.500" width="22" height="22.500"/>
 <path d="M303 26L318 32.500L324 43L317 48L307 42ZM303 26L313 37"/><circle cx="314" cy="37.500" r="1.800" fill="#eee"/>
 <path d="M371 30V26H391V30M381 26V48M376 48H386"/>
 <rect x="430" y="26" width="7.500" height="7.500"/>
 <path d="M443 29.500h9M447.500 25v9M434 39l4.500 4.500L434 48l-4.500-4.500z"/>
 <rect x="444" y="39" width="7" height="7"/>
 <path d="M492 49C488 46 485 41 485 38C486 35 489 37 491 40V28C491 25 494 25 494.500 28V34V25C495 22 498 22 498.500 25V34V27C499 24 503 24 503 27V34V30C503.500 27 507 28 507 30V42C507 47 503 50 498 50C495 50 493 50 492 49Z"/>
 <path d="M543 50L546 43C543 40 543 36 544 33C546 28 550 25 555 25C561 25 566 30 566 37C566 44 561 49 555 49C552 49 550 48 548 47C546 49 544 50 543 50Z"/>
 <path stroke-width="1.200" d="M1123 26l-7 22" stroke="#777"/>
 <path d="M1469 34.500l4 4 4-4M2389.500 34.500l4 4 4-4M2469.500 34.500l4 4 4-4"/>
 <path d="M2048 44V36A12 12 0 0 1 2072 36V44"/>
 <rect x="2047.500" y="37" width="5.500" height="10.500" rx="2.700"/><rect x="2067" y="37" width="5.500" height="10.500" rx="2.700"/>
 <path d="M2363 27.500V45.500L2379 36.500Z"/>
</g>
<!-- avatar -->
<clipPath id="av"><circle cx="2115" cy="36" r="18"/></clipPath>
<g clip-path="url(#av)">
 <rect x="2095" y="16" width="40" height="40" fill="#d5d4d0"/>
 <path d="M2097 52C2097 34 2100 18 2114 17C2124 18 2127 26 2128 36C2128 44 2126 50 2122 56H2100Z" fill="#4f3a2f"/>
 <path d="M2106 30C2108 25 2118 25 2119 31C2120 38 2117 44 2113 44C2109 44 2105 37 2106 30Z" fill="#c99a88"/>
 <path d="M2109 38h6" stroke="#a83a45" stroke-width="1.500"/>
 <path d="M2104 56C2108 46 2122 44 2128 50V56Z" fill="#231f1d"/>
</g>
<rect x="2154" y="13" width="78" height="47" rx="8" fill="#3d8ae5"/>
<rect x="2245" y="13" width="81" height="47" rx="23.500" fill="#444"/>
<circle cx="2269" cy="36.500" r="17.500" fill="#2c2c2c"/>
<path d="M2263 30L2258 36.500L2263 43M2275 30L2280 36.500L2275 43M2271 28L2267 45" fill="none" stroke="#eee" stroke-width="1.500"/>

<!-- left header icons -->
<g fill="none" stroke="#9a9a9a" stroke-width="1.500">
 <circle cx="32" cy="98" r="6.500"/><path d="M37 103L43 109"/>
 <path d="M329 103L334 98L339 103"/>
</g>
<path d="M320 161H337M328.500 152.500V169" stroke="#eee" stroke-width="1.300"/>
<path d="M27 328L31 333L37 324" stroke="#fff" stroke-width="2" fill="none"/>
<!-- frame icons -->
<g fill="none" stroke="#cfcfcf" stroke-width="1.300">
 <path d="M31 506V520M38 506V520M27 510H43M27 516H43"/>
 <path d="M31 714V728M38 714V728M27 718H43M27 724H43"/>
 <path d="M31 760V774M38 760V774M27 764H43M27 770H43"/>
 <path d="M31 807V821M38 807V821M27 811H43M27 817H43"/>
 <path d="M31 853V867M38 853V867M27 857H43M27 863H43"/>
 <path d="M31 899V913M38 899V913M27 903H43M27 909H43"/>
 <path d="M31 1362V1376M38 1362V1376M27 1366H43M27 1372H43"/>
 <path d="M31 1408V1422M38 1408V1422M27 1412H43M27 1418H43"/>
 <path d="M31 1448V1455M38 1448V1455M27 1452H43"/>
</g>
<!-- vector icons -->
<g fill="none" stroke="#888" stroke-width="2.500" stroke-linecap="round">
 <path d="M63 582H76M63 628H76M64 674H76M63 952Q69 955 76 951M63 999H76M63 1045H76M63 1090Q70 1090 76 1092M63 1137Q70 1134 76 1139"/>
 <path stroke="#666" stroke-width="1.500" d="M63 1184C64 1180 72 1179 76 1183C76 1187 66 1189 63 1184Z"/>
</g>
<!-- image icons -->
<g fill="none" stroke="#808080" stroke-width="1.300">
 <path d="M61 1222h16.500v16.500H61zM61 1235l5-4.500 8 7.500M71 1226.500a1.800 1.800 0 1 0 0.100 0"/>
 <path d="M26 1268h17v16.500H26zM26 1281l5-4.500 8 7.500M36 1272.500a1.800 1.800 0 1 0 0.100 0"/>
 <path d="M26 1315h17v16.500H26zM26 1328l5-4.500 8 7.500M36 1319.500a1.800 1.800 0 1 0 0.100 0"/>
</g>
<!-- lock & eyes -->
<rect x="299.500" y="1136" width="10.500" height="9.500" fill="#fff"/>
<path d="M307.500 1136V1133A3.300 3.300 0 0 1 314 1133V1135.500" fill="none" stroke="#fff" stroke-width="1.500"/>
<path d="M325.500 1138C330 1131 339 1131 343.500 1138C339 1145 330 1145 325.500 1138Z" fill="none" stroke="#fff" stroke-width="1.500"/><circle cx="334.500" cy="1138" r="2.800" fill="#fff"/>
<path d="M325 1183C330 1187 339 1187 344 1183M328 1184L326 1187M334.500 1186V1189M341 1184L343 1187" fill="none" stroke="#777" stroke-width="1.200"/>
<!-- right panel icons -->
<rect x="2175" y="200" width="24" height="24" fill="#eaeaea"/>
<path d="M2456 212C2460 207 2468 207 2472 212C2468 217 2460 217 2456 212Z" fill="none" stroke="#fff" stroke-width="1.500"/><circle cx="2464" cy="212" r="2.600" fill="#fff"/>
<g fill="none" stroke="#bbb" stroke-width="1.200">
 <path d="M2460 273V289M2469 289V273"/><circle cx="2460" cy="289" r="2.500"/><circle cx="2469" cy="278" r="2.500"/>
</g>
<path d="M2457 355H2474M2465.500 346.500V363.500" stroke="#eee" stroke-width="1.300"/>
<path d="M2457 1163H2473M2465 1155V1171" stroke="#bbb" stroke-width="1.300"/>
<path d="M2187 455V463L2192 459ZM2187 505V513L2192 509Z" fill="#777"/>
<circle cx="2189" cy="628" r="12" fill="#e6b84e"/>
<circle cx="2189" cy="677" r="11.500" fill="#3c3e35" stroke="#4a4a4a"/>
<circle cx="2189" cy="726" r="12" fill="#e0d9cb"/>
<circle cx="2189" cy="775" r="12" fill="#f4f2ee"/>
<circle cx="2189" cy="824" r="11.500" fill="#222" stroke="#3f3f3f"/>
<circle cx="2189" cy="873" r="12" fill="#e0506a"/>
<g fill="#fff">
 <rect x="2178" y="982" width="4.500" height="20"/><rect x="2186" y="982" width="5" height="20"/><rect x="2196" y="982" width="4.500" height="20"/>
 <rect x="2178" y="1031" width="4.500" height="20"/><rect x="2186" y="1031" width="5" height="20"/><rect x="2196" y="1031" width="4.500" height="20"/>
 <rect x="2178" y="1080" width="4.500" height="20"/><rect x="2186" y="1080" width="5" height="20"/><rect x="2196" y="1080" width="4.500" height="20"/>
</g>
<circle cx="2442" cy="1403" r="23" fill="#1e1e1e"/>
</svg>
</body></html>
